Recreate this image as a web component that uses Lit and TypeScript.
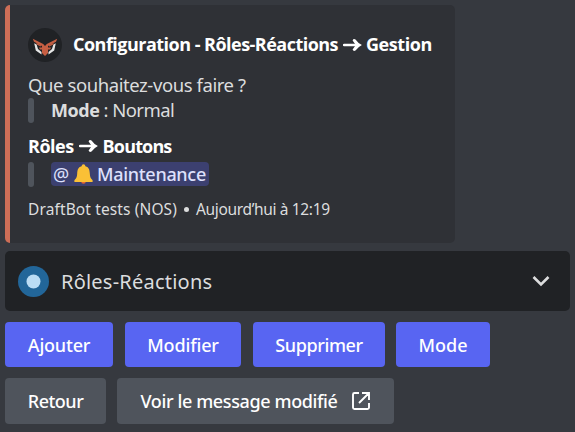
import { LitElement, html, css } from "lit";
import { customElement } from "lit/decorators.js";

@customElement("app-root")
export class AppRoot extends LitElement {
  static styles = css`
    :host {
      display: block;
      box-sizing: border-box;
      width: 575px;
      height: 432px;
      padding: 5px 5px 0;
      overflow: hidden;
      background: #36393f;
      color: #dcddde;
      font-family: "Noto Sans", "Open Sans", sans-serif;
      font-size: 18.5px;
      white-space: nowrap;
    }
    svg { display: block; flex: none; }
    .embed {
      box-sizing: border-box;
      width: 450px;
      height: 238px;
      padding: 23px 0 0 18px;
      border-left: 5px solid #cd6e57;
      border-radius: 5px;
      background: #2f3136;
    }
    .row { display: flex; align-items: center; }
    .author { height: 34px; margin-bottom: 10px; }
    .bold { font-family: "Open Sans", sans-serif; font-weight: 700; font-size: 18px; color: #fff; }
    .title { margin-left: 11px; padding-bottom: 2px; letter-spacing: -0.52px; }
    .arrow { width: 19px; height: 16px; }
    .title-arrow { margin: 0 4px 0 5px; }
    .gestion { padding-bottom: 2px; letter-spacing: -0.45px; }
    .line { height: 26px; }
    .ask { padding-bottom: 2px; letter-spacing: -0.42px; }
    .quote { height: 25px; }
    .quote::before { content: ""; width: 6px; height: 25px; border-radius: 3px; background: #4f545c; margin-right: 17px; }
    .mode { padding-bottom: 2px; color: #dcddde; letter-spacing: -0.4px; }
    .normal { padding-bottom: 2px; margin-left: 4px; letter-spacing: -0.55px; }
    .field { height: 24px; margin: 11px 0 4px; }
    .roles { letter-spacing: -0.5px; }
    .field-arrow { margin: 0 5px 0 5px; }
    .boutons { letter-spacing: -0.85px; }
    .mention {
      box-sizing: border-box;
      width: 158px;
      height: 24px;
      padding-left: 2px;
      margin-bottom: 1px;
      border-radius: 4px;
      background: #3c4070;
      color: #dee0fc;
      font-size: 18px;
      font-weight: 500;
    }
    .at { font-weight: 400; font-size: 18px; width: 21px; padding-bottom: 1px; }
    .maint { margin-left: 4px; padding-bottom: 1px; letter-spacing: -0.3px; }
    .footer { height: 22px; margin-top: 11px; font-size: 15.5px; }
    .server { letter-spacing: 0.12px; }
    .dot { width: 5px; height: 5px; border-radius: 3px; background: #dcddde; margin: 0 7px; }
    .time { letter-spacing: -0.35px; }
    .select {
      box-sizing: border-box;
      height: 60px;
      margin-top: 8px;
      padding: 0 19px 0 13px;
      border-radius: 5px;
      background: #202225;
    }
    .choice { flex: 1; margin-left: 12px; font-size: 20px; letter-spacing: 0.22px; }
    .actions { margin-top: 11px; }
    .btn {
      display: flex;
      align-items: center;
      justify-content: center;
      box-sizing: border-box;
      height: 45px;
      border-radius: 4px;
      background: #5865f2;
      color: #fff;
      font-size: 18px;
      font-weight: 500;
    }
    .grey { height: 46px; background: #4f545c; }
    .add { width: 108px; margin-right: 12px; letter-spacing: -0.2px; }
    .edit { width: 116px; margin-right: 12px; letter-spacing: -0.15px; }
    .remove { width: 132px; margin-right: 11px; letter-spacing: -0.4px; }
    .switch { width: 94px; letter-spacing: 0.05px; }
    .back { width: 101px; margin-right: 11px; letter-spacing: -0.5px; }
    .view { width: 277px; letter-spacing: -0.38px; }
    .view svg { margin-left: 13px; }
  `;

  private arrow(cls: string) {
    return html`<svg class="arrow ${cls}" viewBox="0 0 19 16">
      <path d="M1 8H14" fill="none" stroke="#fff" stroke-width="2.3" stroke-linecap="round" />
      <path d="M9.6 3.4Q10.4 1.2 12.5 2.4Q15 6 18.9 8Q15 10 12.5 13.6Q10.4 14.8 9.6 12.6L12.8 8Z" fill="#fff" />
    </svg>`;
  }

  private avatar() {
    return html`<svg width="34" height="34" viewBox="0 0 34 34">
      <circle cx="17" cy="17" r="17" fill="#202225" />
      <path d="M6.2 15.2L7.8 22.5L13.5 26.5V24L10 21L8.6 16.5ZM27.8 15.2L26.2 22.5L20.5 26.5V24L24 21L25.4 16.5Z" fill="#e6e6e6" />
      <path d="M4.8 10.8L15.2 16L17 18L18.8 16L29.2 10.8L28 13.8L20 18V19.6H23L22.2 21.4H20V25L17 28L14 25V21.4H11.8L11 19.6H14V18L6 13.8Z" fill="#c65f43" />
      <path d="M8.5 15.7L13 18M25.5 15.7L21 18" stroke="#c65f43" stroke-width="1.4" />
    </svg>`;
  }

  render() {
    return html`
      <div class="embed">
        <div class="row author">
          ${this.avatar()}
          <span class="bold title">Configuration - Rôles-Réactions</span>${this.arrow("title-arrow")}<span class="bold gestion">Gestion</span>
        </div>
        <div class="row line"><span class="ask">Que souhaitez-vous faire ?</span></div>
        <div class="row quote"><span class="bold mode">Mode</span><span class="normal">: Normal</span></div>
        <div class="row field">
          <span class="bold roles">Rôles</span>${this.arrow("field-arrow")}<span class="bold boutons">Boutons</span>
        </div>
        <div class="row quote">
          <div class="row mention">
            <span class="at">@</span>
            <svg width="19" height="20" viewBox="0 0 19 20">
              <circle cx="9.5" cy="17.5" r="2.3" fill="#e8672e" />
              <path d="M9.5 0.3Q11.3 0.3 11.4 2.2C15.2 3.2 15.6 6.3 15.8 9.5C16 13 16.6 14.2 18 15.4Q19.2 16.6 18.4 18H0.6Q-0.2 16.6 1 15.4C2.4 14.2 3 13 3.2 9.5C3.4 6.3 3.8 3.2 7.6 2.2Q7.7 0.3 9.5 0.3Z" fill="#fac036" />
            </svg>
            <span class="maint">Maintenance</span>
          </div>
        </div>
        <div class="row footer">
          <span class="server">DraftBot tests (NOS)</span><span class="dot"></span><span class="time">Aujourd’hui à 12:19</span>
        </div>
      </div>
      <div class="row select">
        <svg width="31" height="31" viewBox="0 0 31 31">
          <circle cx="15.5" cy="15.5" r="15.5" fill="#226699" />
          <circle cx="15.5" cy="15.5" r="7" fill="#bbddf5" />
        </svg>
        <span class="choice">Rôles-Réactions</span>
        <svg width="20" height="14" viewBox="0 0 20 14">
          <path d="M2.5 3L10 10.5L17.5 3" fill="none" stroke="#dcddde" stroke-width="2.6" />
        </svg>
      </div>
      <div class="row actions">
        <div class="btn add">Ajouter</div><div class="btn edit">Modifier</div><div class="btn remove">Supprimer</div><div class="btn switch">Mode</div>
      </div>
      <div class="row actions">
        <div class="btn grey back">Retour</div><div class="btn grey view">Voir le message modifié<svg width="20" height="20" viewBox="0 0 20 20">
            <path d="M8 2H3.5Q2 2 2 3.5V16.5Q2 18 3.5 18H16.5Q18 18 18 16.5V12M11 2H18V9M18 2L8 12" fill="none" stroke="#fff" stroke-width="1.9" />
          </svg></div>
      </div>
    `;
  }
}
